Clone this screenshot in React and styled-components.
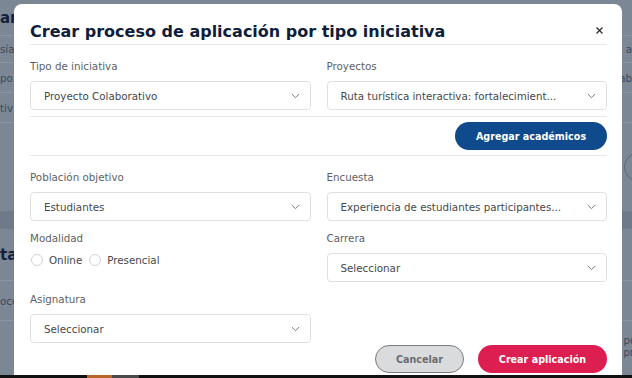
import React from "react";
import styled, { createGlobalStyle } from "styled-components";

const GlobalStyle = createGlobalStyle`
  html, body { margin: 0; padding: 0; }
  body { font-family: "DejaVu Sans", Verdana, sans-serif; background: #7c8796; }
  * { box-sizing: border-box; }
`;

const Screen = styled.div`
  position: relative;
  width: 632px;
  height: 378px;
  overflow: hidden;
  display: flex;
  flex-direction: column;
  background: #7c8796;
`;

const BackPage = styled.div`
  flex: 1;
  display: flex;
  flex-direction: column;
`;

const BgRow = styled.div`
  display: flex;
  justify-content: space-between;
  align-items: center;
  height: ${(p) => p.h}px;
  border-bottom: ${(p) => (p.line ? "1px solid #8993a1" : "none")};
  background: ${(p) => (p.dark ? "#6e7989" : "transparent")};
  color: ${(p) => (p.strong ? "#15213a" : "#3c4859")};
  font-weight: ${(p) => (p.strong ? 700 : 400)};
  font-size: ${(p) => (p.strong ? 15 : 10.3)}px;
  white-space: nowrap;
`;

const BgCircle = styled.span`
  width: 30px;
  height: 30px;
  border-radius: 50%;
  border: 1px solid #5b6677;
  margin-right: -22px;
`;

const SmallStack = styled.span`
  display: flex;
  flex-direction: column;
  line-height: 12px;
  font-size: 10px;
  margin-right: -4px;
`;

const Taskbar = styled.div`
  height: 3px;
  background: #111;
  display: flex;
  padding-left: 87px;
`;

const TaskItem = styled.span`
  width: ${(p) => p.w}px;
  background: ${(p) => p.c};
`;

const Modal = styled.div`
  position: absolute;
  left: 14px;
  top: 4px;
  width: 608px;
  bottom: 3px;
  background: #fff;
  border-radius: 8px 8px 0 0;
  padding: 0 15px 0 16px;
  display: flex;
  flex-direction: column;
`;

const Header = styled.div`
  display: flex;
  justify-content: space-between;
  align-items: center;
  padding: 18px 0 2px;
  border-bottom: 1px solid #e4e7eb;
`;

const Title = styled.h2`
  margin: 0;
  font-size: 16px;
  line-height: 20px;
  font-weight: 700;
  color: #0f1d3a;
`;

const CloseBtn = styled.button`
  border: 0;
  background: none;
  padding: 0;
  margin: 0 3px 4px 0;
  width: 9px;
  height: 9px;
  display: flex;
  cursor: pointer;
`;

const Grid = styled.div`
  display: grid;
  grid-template-columns: 1fr 1fr;
  column-gap: 16px;
  row-gap: 10px;
  padding-top: ${(p) => p.top}px;
`;

const Field = styled.div`
  display: flex;
  flex-direction: column;
  gap: 8px;
`;

const Label = styled.label`
  font-size: 10.3px;
  line-height: 14px;
  color: #5d6166;
`;

const SelectBox = styled.div`
  height: 29px;
  border: 1px solid #dde1e6;
  border-radius: 4px;
  display: flex;
  align-items: center;
  justify-content: space-between;
  padding: 0 10px 0 13px;
  font-size: 10.3px;
  color: #45484c;
  background: #fff;
  white-space: nowrap;
`;

const Divider = styled.div`
  height: 1px;
  background: #e4e7eb;
  margin: ${(p) => p.m};
`;

const ActionRow = styled.div`
  display: flex;
  justify-content: flex-end;
  gap: 14px;
  margin-top: ${(p) => p.top || 0}px;
`;

const Pill = styled.button`
  height: 28px;
  width: ${(p) => p.w}px;
  border-radius: 14px;
  font-family: inherit;
  font-size: 9.6px;
  font-weight: 700;
  padding: 0;
  cursor: pointer;
  background: ${(p) => p.bg};
  color: ${(p) => p.fg};
  border: ${(p) => (p.outline ? "1px solid #7a7d80" : "0")};
`;

const RadioRow = styled.div`
  display: flex;
  align-items: center;
  height: 14px;
  padding-left: 1px;
  gap: 7px;
`;

const RadioOption = styled.label`
  display: flex;
  align-items: center;
  gap: 6px;
  font-size: 10.3px;
  color: #45484c;
`;

const RadioCircle = styled.span`
  width: 12px;
  height: 12px;
  border-radius: 50%;
  border: 1px solid #cfd3d8;
  background: #fff;
`;

const Chevron = () => (
  <svg width="9" height="6" viewBox="0 0 9 6">
    <path d="M0.8 1 L4.5 4.7 L8.2 1" fill="none" stroke="#777" strokeWidth="1" />
  </svg>
);

const Select = ({ value }) => (
  <SelectBox>
    <span>{value}</span>
    <Chevron />
  </SelectBox>
);

export default function App() {
  return (
    <>
      <GlobalStyle />
      <Screen>
        <BackPage>
          <BgRow h={36} strong line>
            <span>ar</span>
            <span />
          </BgRow>
          <BgRow h={27} line>
            <span>sía</span>
            <span>a</span>
          </BgRow>
          <BgRow h={30} line>
            <span>po</span>
            <span>ab</span>
          </BgRow>
          <BgRow h={30} line>
            <span>tiv</span>
            <span />
          </BgRow>
          <BgRow h={88}>
            <span />
            <BgCircle />
          </BgRow>
          <BgRow h={18} dark>
            <span />
            <span />
          </BgRow>
          <BgRow h={52} strong line>
            <span>ta</span>
            <span />
          </BgRow>
          <BgRow h={40} line>
            <span>oce</span>
            <span />
          </BgRow>
          <BgRow h={52}>
            <span />
            <SmallStack>
              <span>pe</span>
              <span>pr</span>
            </SmallStack>
          </BgRow>
        </BackPage>
        <Taskbar>
          <TaskItem w={25} c="#b8652a" />
          <TaskItem w={27} c="#4a4a4a" />
        </Taskbar>

        <Modal>
          <Header>
            <Title>Crear proceso de aplicación por tipo iniciativa</Title>
            <CloseBtn aria-label="Cerrar">
              <svg width="9" height="9" viewBox="0 0 9 9">
                <path d="M1.5 1.5 L7.5 7.5 M7.5 1.5 L1.5 7.5" stroke="#333" strokeWidth="1.4" />
              </svg>
            </CloseBtn>
          </Header>

          <Grid top={14}>
            <Field>
              <Label>Tipo de iniciativa</Label>
              <Select value="Proyecto Colaborativo" />
            </Field>
            <Field>
              <Label>Proyectos</Label>
              <Select value="Ruta turística interactiva: fortalecimient..." />
            </Field>
          </Grid>

          <Divider m="6px 0 5px" />
          <ActionRow>
            <Pill w={152} bg="#0e4a8c" fg="#fff">
              Agregar académicos
            </Pill>
          </ActionRow>
          <Divider m="5px 0 0" />

          <Grid top={14}>
            <Field>
              <Label>Población objetivo</Label>
              <Select value="Estudiantes" />
            </Field>
            <Field>
              <Label>Encuesta</Label>
              <Select value="Experiencia de estudiantes participantes..." />
            </Field>
            <Field>
              <Label>Modalidad</Label>
              <RadioRow>
                <RadioOption>
                  <RadioCircle />
                  Online
                </RadioOption>
                <RadioOption>
                  <RadioCircle />
                  Presencial
                </RadioOption>
              </RadioRow>
            </Field>
            <Field>
              <Label>Carrera</Label>
              <Select value="Seleccionar" />
            </Field>
            <Field>
              <Label>Asignatura</Label>
              <Select value="Seleccionar" />
            </Field>
          </Grid>

          <ActionRow top={2}>
            <Pill w={89} bg="#d9dbdd" fg="#6a6d70" outline>
              Cancelar
            </Pill>
            <Pill w={129} bg="#dc1f50" fg="#fff">
              Crear aplicación
            </Pill>
          </ActionRow>
        </Modal>
      </Screen>
    </>
  );
}
